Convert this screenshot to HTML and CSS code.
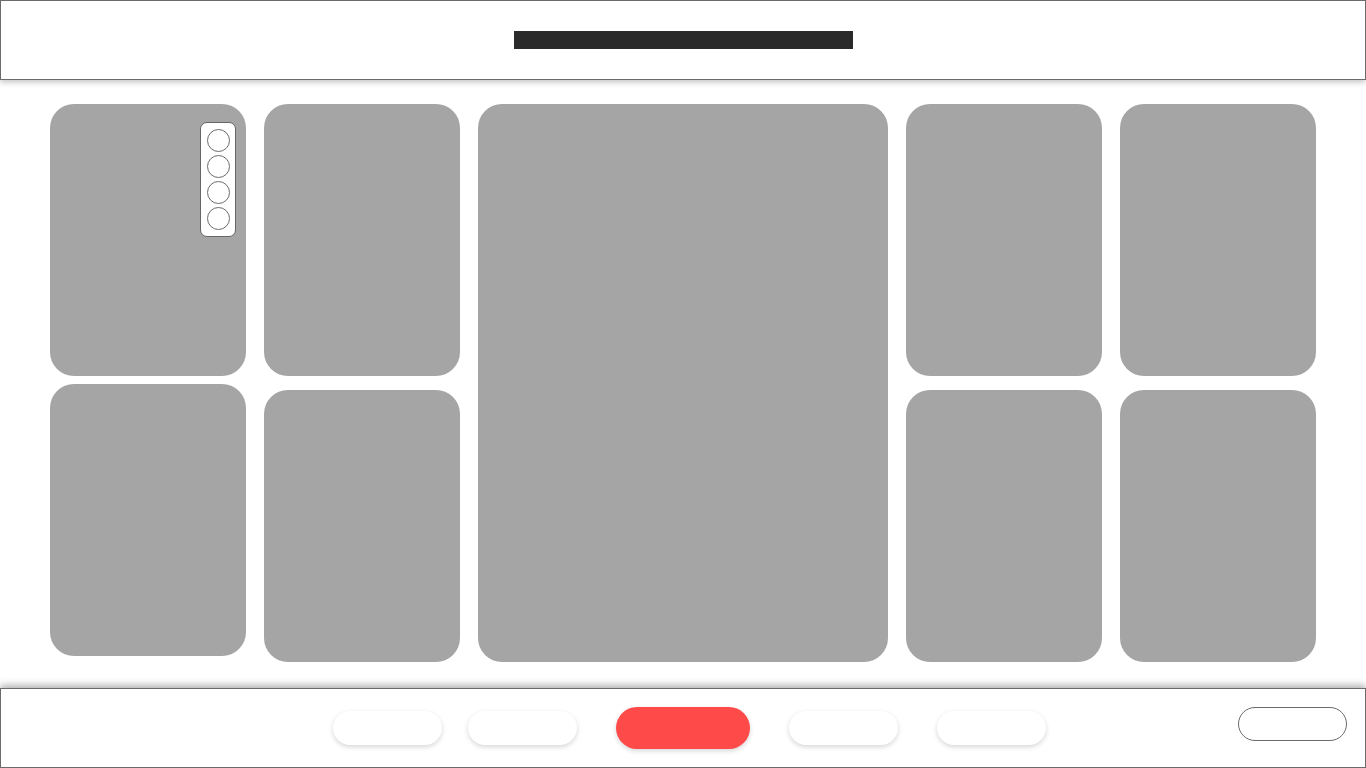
FILE: index.html
```html
<!DOCTYPE html>
<html lang="en">
<head>
    <meta charset="UTF-8">
    <meta name="viewport" content="width=device-width, initial-scale=1.0">
    <title>Board</title>
    <link rel="stylesheet" href="styles.css">
</head>
<body>
    <header class="top-bar">
        <div class="title-bar"></div>
    </header>

    <main class="board">
        <div class="column">
            <div class="tile tile-a">
                <div class="tool-panel">
                    <span class="dot"></span>
                    <span class="dot"></span>
                    <span class="dot"></span>
                    <span class="dot"></span>
                </div>
            </div>
            <div class="tile tile-a"></div>
        </div>
        <div class="column wide-gap">
            <div class="tile"></div>
            <div class="tile"></div>
        </div>
        <div class="column center">
            <div class="tile big"></div>
        </div>
        <div class="column wide-gap">
            <div class="tile"></div>
            <div class="tile"></div>
        </div>
        <div class="column wide-gap">
            <div class="tile"></div>
            <div class="tile"></div>
        </div>
    </main>

    <footer class="bottom-bar">
        <nav class="pill-nav">
            <button class="pill"></button>
            <button class="pill"></button>
            <button class="pill active"></button>
            <button class="pill"></button>
            <button class="pill"></button>
        </nav>
        <button class="outline-btn"></button>
    </footer>
</body>
</html>
```

FILE: styles.css
```css
* {
    margin: 0;
    padding: 0;
    box-sizing: border-box;
}

body {
    width: 1366px;
    height: 768px;
    overflow: hidden;
    background: #fff;
    font-family: "Liberation Sans", Arial, sans-serif;
    display: flex;
    flex-direction: column;
}

.top-bar {
    height: 80px;
    border: 1px solid #6b6b6b;
    background: #fff;
    display: flex;
    justify-content: center;
    align-items: center;
    box-shadow: 0 2px 6px rgba(0, 0, 0, 0.25);
    position: relative;
    z-index: 2;
}

.title-bar {
    width: 339px;
    height: 18px;
    background: #2a2a2a;
}

.board {
    height: 608px;
    padding: 24px 50px 0;
    display: flex;
    gap: 18px;
}

.column {
    width: 196px;
    display: flex;
    flex-direction: column;
    gap: 8px;
}

.column.wide-gap {
    gap: 14px;
}

.column.center {
    width: 410px;
}

.tile {
    height: 272px;
    background: #a5a5a5;
    border-radius: 24px;
    position: relative;
}

.tile.big {
    height: 558px;
}

.tool-panel {
    position: absolute;
    top: 18px;
    left: 150px;
    width: 36px;
    height: 115px;
    background: #fff;
    border: 1px solid #666;
    border-radius: 7px;
    display: flex;
    flex-direction: column;
    align-items: center;
    padding-top: 6px;
    gap: 3px;
}

.dot {
    width: 23px;
    height: 23px;
    border: 1px solid #6b6b6b;
    border-radius: 50%;
    background: #fff;
}

.bottom-bar {
    height: 80px;
    border: 1px solid #6b6b6b;
    background: #fff;
    position: relative;
    display: flex;
    align-items: center;
    justify-content: center;
    box-shadow: 0 -3px 7px rgba(0, 0, 0, 0.3);
}

.pill-nav {
    display: flex;
    align-items: center;
    gap: 26px;
    margin-left: 13px;
}

.pill {
    width: 109px;
    height: 34px;
    border: none;
    border-radius: 17px;
    background: #fff;
    box-shadow: 0 2px 5px rgba(0, 0, 0, 0.16);
    cursor: pointer;
}

.pill.active {
    width: 134px;
    height: 42px;
    border-radius: 21px;
    background: #ff4a4a;
    margin: 0 13px;
}

.pill:last-child {
    margin-left: 13px;
}

.outline-btn {
    position: absolute;
    right: 18px;
    top: 18px;
    width: 109px;
    height: 34px;
    border: 1px solid #6b6b6b;
    border-radius: 17px;
    background: #fff;
    cursor: pointer;
}
```
